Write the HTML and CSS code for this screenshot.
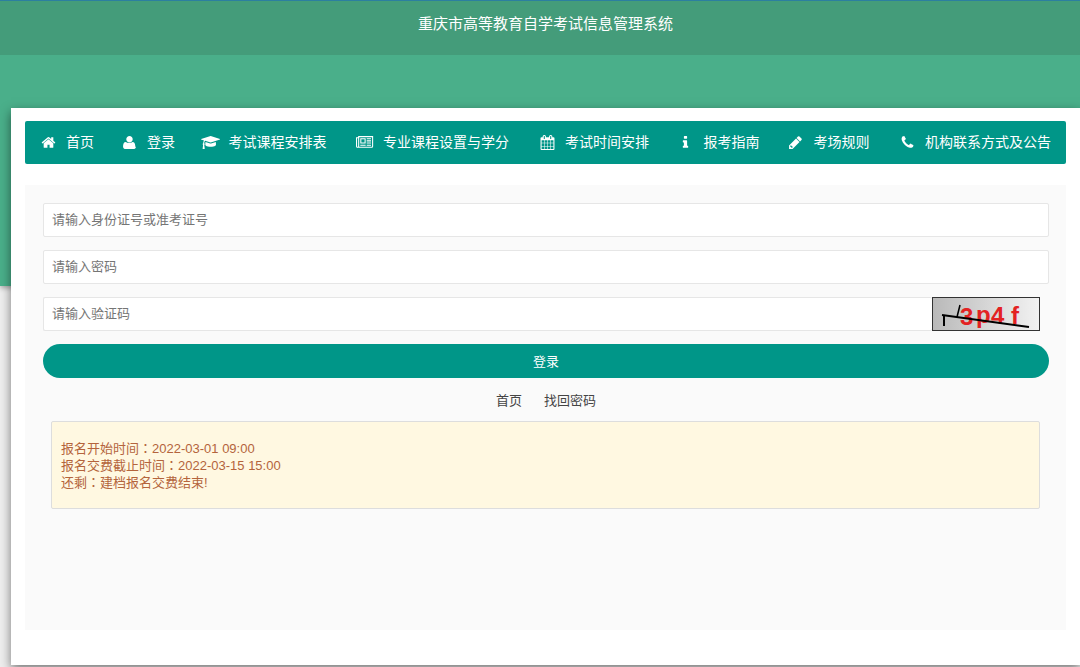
FILE: index.html
```html
<!DOCTYPE html>
<html lang="zh-CN">
<head>
<meta charset="utf-8">
<meta name="viewport" content="width=device-width, initial-scale=1">
<title>重庆市高等教育自学考试信息管理系统</title>
<link rel="stylesheet" href="styles.css">
</head>
<body>
<div class="hero">
  <header class="topbar"><h1 class="title">重庆市高等教育自学考试信息管理系统</h1></header>
</div>
<main class="card">
  <nav class="nav">
    <a class="nav-item" href="#home"><span class="icon"><svg viewBox="0 0 1792 1792"><path d="M1472 992v480q0 26-19 45t-45 19h-384v-384h-256v384h-384q-26 0-45-19t-19-45v-480q0-1 .5-3t.5-3l575-474 575 474q1 2 1 6zm223-69l-62 74q-8 9-21 11h-3q-13 0-21-7l-692-577-692 577q-12 8-24 7-13-2-21-11l-62-74q-8-10-7-23.5t11-21.5l719-599q32-26 76-26t76 26l244 204v-195q0-14 9-23t23-9h192q14 0 23 9t9 23v408l219 182q10 8 11 21.5t-7 23.5z"/></svg></span>首页</a>
    <a class="nav-item" href="#login"><span class="icon"><svg viewBox="0 0 1792 1792"><path d="M1664 1399q0 109-62.500 187t-150.500 78h-1110q-88 0-150.500-78t-62.500-187q0-85 8.500-160.500t31.500-152 58.500-131 94-89 134.500-34.500q131 128 401 128t401-128q76 0 134.500 34.500t94 89 58.500 131 31.500 152 8.500 160.500zm-384-887q0 159-112.500 271.500t-271.500 112.500-271.500-112.500-112.500-271.500 112.500-271.500 271.500-112.500 271.500 112.500 112.500 271.500z"/></svg></span>登录</a>
    <a class="nav-item" href="#courses"><span class="icon"><svg viewBox="0 0 2304 1792"><path d="M1774 836l18 316q4 69-82 128t-235 93.500-323 34.500-323-34.500-235-93.500-82-128l18-316 574 181q22 7 48 7t48-7zm530-324q0 23-22 31l-1120 352q-4 1-10 1t-10-1l-652-206q-43 34-71 111.500t-34 178.500q63 36 63 109 0 69-58 107l58 433q2 14-8 25-9 11-24 11h-192q-15 0-24-11-10-11-8-25l58-433q-58-38-58-107 0-73 65-111 11-207 98-330l-333-104q-22-8-22-31t22-31l1120-352q4-1 10-1t10 1l1120 352q22 8 22 31z"/></svg></span>考试课程安排表</a>
    <a class="nav-item" href="#majors"><span class="icon"><svg viewBox="0 0 2048 1792"><path d="M1024 512h-384v384h384v-384zm128 640v128h-640v-128h640zm0-768v640h-640v-640h640zm640 768v128h-512v-128h512zm0-256v128h-512v-128h512zm0-256v128h-512v-128h512zm0-256v128h-512v-128h512zm-1536 960v-960h-128v960q0 26 19 45t45 19 45-19 19-45zm1664 0v-1088h-1536v1088q0 33-11 64h1483q26 0 45-19t19-45zm128-1216v1216q0 80-56 136t-136 56h-1664q-80 0-136-56t-56-136v-1088h256v-128h1792z"/></svg></span>专业课程设置与学分</a>
    <a class="nav-item" href="#schedule"><span class="icon"><svg viewBox="0 0 1792 1792"><path d="M192 1664h288v-288h-288v288zm352 0h320v-288h-320v288zm-352-352h288v-320h-288v320zm352 0h320v-320h-320v320zm-352-384h288v-288h-288v288zm736 736h320v-288h-320v288zm-384-736h320v-288h-320v288zm768 736h288v-288h-288v288zm-384-352h320v-320h-320v320zm-352-864v-288q0-13-9.500-22.500t-22.500-9.500h-64q-13 0-22.500 9.500t-9.500 22.500v288q0 13 9.500 22.500t22.500 9.500h64q13 0 22.500-9.500t9.500-22.500zm736 864h288v-320h-288v320zm-384-384h320v-288h-320v288zm384 0h288v-288h-288v288zm32-480v-288q0-13-9.500-22.500t-22.500-9.500h-64q-13 0-22.500 9.500t-9.500 22.500v288q0 13 9.500 22.500t22.500 9.500h64q13 0 22.500-9.500t9.500-22.500zm384-64v1280q0 52-38 90t-90 38h-1408q-52 0-90-38t-38-90v-1280q0-52 38-90t90-38h128v-96q0-66 47-113t113-47h64q66 0 113 47t47 113v96h384v-96q0-66 47-113t113-47h64q66 0 113 47t47 113v96h128q52 0 90 38t38 90z"/></svg></span>考试时间安排</a>
    <a class="nav-item" href="#guide"><span class="icon"><svg viewBox="0 0 1792 1792"><path d="M1216 1344v128q0 26-19 45t-45 19h-512q-26 0-45-19t-19-45v-128q0-26 19-45t45-19h64v-384h-64q-26 0-45-19t-19-45v-128q0-26 19-45t45-19h384q26 0 45 19t19 45v576h64q26 0 45 19t19 45zm-128-1152v192q0 26-19 45t-45 19h-256q-26 0-45-19t-19-45v-192q0-26 19-45t45-19h256q26 0 45 19t19 45z"/></svg></span>报考指南</a>
    <a class="nav-item" href="#rules"><span class="icon"><svg viewBox="0 0 1792 1792"><path d="M491 1536l91-91-235-235-91 91v107h128v128h107zM960 416l416 416-832 832h-416v-416zm683 96q0 53-37 90l-166 166-416-416 166-165q36-38 90-38 53 0 91 38l235 234q37 39 37 91z"/></svg></span>考场规则</a>
    <a class="nav-item" href="#contact"><span class="icon"><svg viewBox="0 0 1792 1792"><path d="M1600 1240q0 27-10 70.500t-21 68.500q-21 50-122 106-94 51-186 51-27 0-53-3.500t-57.500-12.500-47-14.500-55.500-20.500-49-18q-98-35-175-83-127-79-264-216t-216-264q-48-77-83-175-3-9-18-49t-20.500-55.500-14.500-47-12.500-57.500-3.500-53q0-92 51-186 56-101 106-122 25-11 68.500-21t70.500-10q14 0 21 3 18 6 53 76 11 19 30 54t35 63.500 31 53.500q3 4 17.500 25t21.500 35.500 7 28.500q0 20-28.500 50t-62 55-62 53-28.500 46q0 9 5 22.500t8.500 20.500 14 24 11.500 19q76 137 174 235t235 174q2 1 19 11.500t24 14 20.500 8.500 22.500 5q18 0 46-28.500t53-62 55-62 50-28.500q14 0 28.500 7t35.500 21.500 25 17.500q25 15 53.500 31t63.500 35 54 30q70 35 76 53 3 7 3 21z"/></svg></span>机构联系方式及公告</a>
  </nav>
  <section class="panel">
    <form class="form">
      <input class="field" type="text" aria-label="身份证号或准考证号" placeholder="请输入身份证号或准考证号">
      <input class="field" type="password" aria-label="密码" placeholder="请输入密码">
      <div class="captcha-row">
        <input class="field" type="text" aria-label="验证码" placeholder="请输入验证码">
        <button class="captcha" type="button" aria-label="更换验证码">
          <svg viewBox="0 0 106 32">
            <defs><linearGradient id="shade"><stop offset="0" stop-color="#b9b9b9"/><stop offset="1" stop-color="#f2f2f2"/></linearGradient></defs>
            <rect width="106" height="32" fill="url(#shade)"/>
            <text class="captcha-text" x="27 43 58 78" y="27 25 26 26">3p4f</text>
            <path d="M11 28V18M9 17L96 29" stroke="#000" stroke-width="2" fill="none"/>
            <path d="M24 19L27 7" stroke="#000" stroke-width="1.500"/>
          </svg>
        </button>
      </div>
      <button class="submit" type="submit">登录</button>
    </form>
    <div class="links"><a href="#home">首页</a><a href="#recover">找回密码</a></div>
    <div class="notice">
      <p>报名开始时间<span class="colon" lang="zh-TW">：</span>2022-03-01 09:00</p>
      <p>报名交费截止时间<span class="colon" lang="zh-TW">：</span>2022-03-15 15:00</p>
      <p>还剩<span class="colon" lang="zh-TW">：</span>建档报名交费结束!</p>
    </div>
  </section>
</main>
</body>
</html>
```

FILE: styles.css
```css
* { box-sizing: border-box; }

body {
  margin: 0;
  background: #eee;
  font-family: "Liberation Sans", "Noto Sans CJK SC", sans-serif;
  font-size: 13px;
  line-height: 17px;
  color: #444;
  overflow-x: hidden;
}

.hero {
  height: 286px;
  background: #4aaf8a;
  box-shadow: 0 2px 5px rgba(0, 0, 0, 0.3);
}

.topbar {
  height: 55px;
  padding-top: 13px;
  padding-left: 11px;
  border-top: 1px solid #2c7fa0;
  background: #449c7a;
}

.title {
  margin: 0;
  font-size: 15px;
  font-weight: 400;
  line-height: 20px;
  text-align: center;
  color: #fff;
}

.card {
  margin: -178px 0 2px 11px;
  padding: 13px 14px 35px;
  background: #fff;
  box-shadow: 0 4px 10px rgba(0, 0, 0, 0.5);
}

.nav {
  display: grid;
  grid-template-columns: 83fr 79fr 154fr 183fr 139fr 110fr 110fr 183fr;
  border-radius: 2px;
  background: #009688;
}

.nav-item {
  display: flex;
  align-items: center;
  justify-content: center;
  gap: 9px;
  height: 43px;
  font-size: 14px;
  white-space: nowrap;
  color: #fff;
  text-decoration: none;
}

.icon {
  display: flex;
  justify-content: center;
  width: 18px;
}

.icon svg {
  flex: none;
  height: 15px;
  fill: currentColor;
}

.panel {
  min-height: 445px;
  margin-top: 21px;
  padding: 18px 17px 18px 18px;
  background: #fafafa;
}

.form {
  display: grid;
  gap: 13px;
}

.field {
  width: 100%;
  height: 34px;
  padding: 0 8px 1px;
  border: 1px solid #e6e6e6;
  border-radius: 2px;
  background: #fff;
  font: inherit;
}

.field::placeholder { color: #757575; }

.captcha-row {
  display: flex;
  padding-right: 9px;
}

.captcha-row .field {
  flex: 1;
  min-width: 0;
  border-right: 0;
}

.captcha {
  flex: none;
  width: 108px;
  height: 34px;
  padding: 0;
  border: 1px solid #333;
  background: #ddd;
}

.captcha svg { display: block; }

.captcha-text {
  font: bold 24px "Liberation Sans", sans-serif;
  fill: #e32222;
}

.submit {
  height: 34px;
  border: 0;
  border-radius: 17px;
  background: #009688;
  color: #fff;
  font: inherit;
}

.links {
  display: flex;
  justify-content: center;
  gap: 22px;
  padding: 14px 0 12px;
}

.links a {
  color: #444;
  text-decoration: none;
}

.notice {
  margin: 0 9px 0 8px;
  padding: 18px 9px 17px;
  border: 1px solid #ddd;
  border-radius: 2px;
  background: #fff8e1;
  color: #b4643c;
}

.notice p { margin: 0; }

.colon {
  font-family: "Noto Sans CJK TC", sans-serif;
  line-height: 0;
}
```
